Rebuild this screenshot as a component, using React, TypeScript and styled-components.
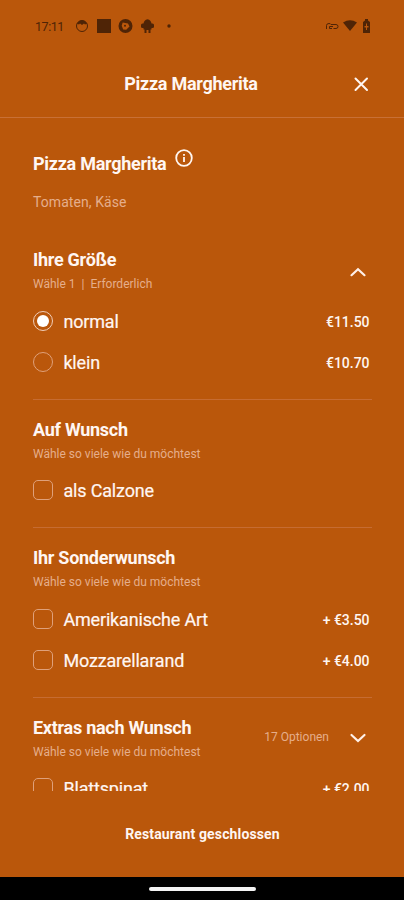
import React from "react";
import styled, { createGlobalStyle } from "styled-components";

const GlobalStyle = createGlobalStyle`
  * { box-sizing: border-box; }
  body { margin: 0; background: #ba570b; font-family: Roboto, "Liberation Sans", sans-serif; }
`;

const Screen = styled.main`
  display: flex;
  flex-direction: column;
  width: 404px;
  height: 900px;
  overflow: hidden;
  background: #ba570b;
  color: #fff6f2;
`;

const StatusBar = styled.div`
  display: flex;
  align-items: center;
  justify-content: space-between;
  height: 52px;
  padding: 0 31px 0 35px;
  color: #4f2406;
`;

const Clock = styled.span`
  width: 29px;
  margin-right: 12px;
  font-size: 12.5px;
  letter-spacing: -0.45px;
  white-space: nowrap;
`;

const StatusGroup = styled.div`
  display: flex;
  align-items: center;
`;

const Header = styled.header`
  display: grid;
  grid-template-columns: 1fr auto 1fr;
  align-items: center;
  height: 66px;
  padding: 0 35px 2px;
  border-bottom: 1px solid #c87036;
`;

const HeaderTitle = styled.h1`
  grid-column: 2;
  margin: 0 22px 0 0;
  font-size: 18px;
  font-weight: 700;
  letter-spacing: -0.27px;
  white-space: nowrap;
`;

const IconButton = styled.button`
  display: flex;
  justify-self: end;
  padding: 0;
  border: 0;
  background: none;
  color: inherit;
`;

const Content = styled.div`
  flex: 0 0 673px;
  overflow: hidden;
  padding: 0 32px 0 33px;
`;

const Product = styled.section`
  height: 112px;
  padding-top: 30px;
`;

const ProductName = styled.div`
  display: flex;
  gap: 8px;
  height: 30px;
`;

const Heading = styled.h2`
  margin: 0;
  font-size: 18px;
  font-weight: 700;
  line-height: 31px;
  letter-spacing: -0.27px;
  white-space: nowrap;
`;

const Description = styled.p`
  margin: 14px 0 0;
  font-size: 14px;
  line-height: 20px;
  letter-spacing: 0.08px;
  color: #e5ae8b;
`;

const Group = styled.section<{ $last?: boolean }>`
  padding-bottom: 16.5px;
  border-bottom: ${(p) => (p.$last ? "0" : "1px solid #c66c32")};
`;

const GroupHead = styled.div`
  display: flex;
  align-items: center;
  justify-content: space-between;
  height: 70px;
  padding: 17px 4px 3px 0;
`;

const GroupTitle = styled.h3`
  margin: 0;
  font-size: 18px;
  font-weight: 700;
  line-height: 25px;
  letter-spacing: -0.27px;
  white-space: nowrap;
`;

const Hint = styled.p`
  margin: 0;
  font-size: 12px;
  line-height: 25px;
  color: #e5ae8b;
  white-space: pre;
`;

const Toggle = styled.div<{ $raised: boolean }>`
  display: flex;
  align-items: center;
  gap: 19px;
  padding-bottom: ${(p) => (p.$raised ? "5px" : "0")};
`;

const Option = styled.label`
  display: flex;
  align-items: center;
  height: 41px;
  padding-right: 2.5px;
`;

const OptionName = styled.span`
  padding-top: 1px;
  font-size: 18px;
  letter-spacing: -0.17px;
  -webkit-text-stroke: 0.2px currentColor;
`;

const Mark = styled.span<{ $round?: boolean; $on?: boolean }>`
  display: grid;
  place-items: center;
  width: 20px;
  height: 20px;
  margin-right: 10.4px;
  border: 1px solid ${(p) => (p.$on ? "#f0cdb8" : "#dfa07a")};
  border-radius: ${(p) => (p.$round ? "50%" : "5px")};
  &::after {
    content: "";
    width: 12px;
    height: 12px;
    border-radius: 50%;
    background: ${(p) => (p.$on ? "#fff" : "transparent")};
  }
`;

const Price = styled.span`
  margin-left: auto;
  padding-top: 2px;
  font-size: 14px;
  font-weight: 500;
  letter-spacing: -0.03px;
`;

const Footer = styled.footer`
  flex: 1;
  display: grid;
  place-items: center;
  padding-left: 1px;
  font-size: 14px;
  font-weight: 700;
  letter-spacing: 0.14px;
`;

const NavBar = styled.div`
  display: grid;
  place-items: center;
  height: 23px;
  background: #000;
`;

const Handle = styled.div`
  width: 107px;
  height: 4px;
  border-radius: 2px;
  background: #f4f4f4;
`;

type Item = { name: string; price?: string; on?: boolean };
type GroupData = { title: string; hint: string; radio?: boolean; items: Item[]; arrow?: "up" | "down"; count?: string };

const anyHint = "Wähle so viele wie du möchtest";
const groups: GroupData[] = [
  { title: "Ihre Größe", hint: "Wähle 1  |  Erforderlich", radio: true, arrow: "up", items: [{ name: "normal", price: "€11.50", on: true }, { name: "klein", price: "€10.70" }] },
  { title: "Auf Wunsch", hint: anyHint, items: [{ name: "als Calzone" }] },
  { title: "Ihr Sonderwunsch", hint: anyHint, items: [{ name: "Amerikanische Art", price: "+ €3.50" }, { name: "Mozzarellarand", price: "+ €4.00" }] },
  { title: "Extras nach Wunsch", hint: anyHint, arrow: "down", count: "17 Optionen", items: [{ name: "Blattspinat", price: "+ €2.00" }] },
];

function Chevron({ dir }: { dir: "up" | "down" }) {
  return (
    <svg width="20" height="20" viewBox="0 0 20 20" fill="none" stroke="#fff0e9" strokeWidth="2.2" strokeLinecap="round">
      <path d={dir === "up" ? "M3.5 13.2 10 7.2l6.5 6" : "M3.5 8 10 14l6.5-6"} />
    </svg>
  );
}

function StatusIcons() {
  return (
    <svg width="98" height="18" viewBox="0 0 98 18" fill="currentColor">
      <circle cx="6" cy="9" r="5.5" fill="none" stroke="currentColor" strokeWidth="1" />
      <path d="M.8 6.5Q6 0 11.2 6.5L9 7.5 8 6.5 6 8 4 6.5 3 7.5z" />
      <path d="M21 2h14v14H21z" />
      <path fillRule="evenodd" d="M49.5 2a7 7 0 1 1 0 14 7 7 0 0 1 0-14zm-2.8 3.6-1 3.2 1.5 3.6 3 .4 3.3-3.3-1.5-3z" />
      <circle cx="49" cy="8.8" r="1" />
      <path d="M66.5 6.5h1q.5-3.5 4-4.3 3.5.8 4 4.3h1q1.5 0 1.5 1.5v1.8q0 1.2-1.5 1.2h-1v1.5h-1V16h-2v-3h-2v3h-2v-3.5h-1V11h-1Q65 11 65 9.8V8q0-1.5 1.5-1.5z" />
      <circle cx="93" cy="9" r="1.7" />
    </svg>
  );
}

function SystemIcons() {
  return (
    <svg width="48" height="18" viewBox="0 0 48 18" fill="currentColor">
      <path d="M1.5 12V8.5Q1.5 6.5 4 6.5q1.5 0 2 1h5q2 0 2 2t-2 2H8.5M8 9.5H4.5v2H7" fill="none" stroke="currentColor" />
      <path d="M18 5.5q7-4.5 14 0L25 14z" />
      <path fillRule="evenodd" d="M40 2h3v1.5l2 1.5v11h-7V5l2-1.5zm1 4.5V9h-1.5v1.5H41V13h1v-2.5h1.5V9H42V6.5z" />
    </svg>
  );
}

export default function App() {
  return (
    <Screen>
      <GlobalStyle />
      <StatusBar>
        <StatusGroup><Clock>17:11</Clock><StatusIcons /></StatusGroup>
        <SystemIcons />
      </StatusBar>
      <Header>
        <HeaderTitle>Pizza Margherita</HeaderTitle>
        <IconButton aria-label="Schließen">
          <svg width="16" height="16" viewBox="0 0 16 16" stroke="currentColor" strokeWidth="2" strokeLinecap="round"><path d="M2.5 2.5 14 14M14 2.5 2.5 14" /></svg>
        </IconButton>
      </Header>
      <Content>
        <Product>
          <ProductName>
            <Heading>Pizza Margherita</Heading>
            <svg width="20" height="20" viewBox="0 0 20 20" fill="none" stroke="currentColor" strokeWidth="1.8"><circle cx="10" cy="10" r="7.8" /><path d="M10 9v5M10 6v1.8" /></svg>
          </ProductName>
          <Description>Tomaten, Käse</Description>
        </Product>
        {groups.map((g, i) => (
          <Group key={g.title} $last={i === groups.length - 1}>
            <GroupHead>
              <div><GroupTitle>{g.title}</GroupTitle><Hint>{g.hint}</Hint></div>
              {g.arrow && <Toggle $raised={g.arrow === "down"}>{g.count && <Hint as="span">{g.count}</Hint>}<Chevron dir={g.arrow} /></Toggle>}
            </GroupHead>
            {g.items.map((it) => (
              <Option key={it.name}>
                <Mark $round={g.radio} $on={it.on} />
                <OptionName>{it.name}</OptionName>
                {it.price && <Price>{it.price}</Price>}
              </Option>
            ))}
          </Group>
        ))}
      </Content>
      <Footer>Restaurant geschlossen</Footer>
      <NavBar><Handle /></NavBar>
    </Screen>
  );
}
